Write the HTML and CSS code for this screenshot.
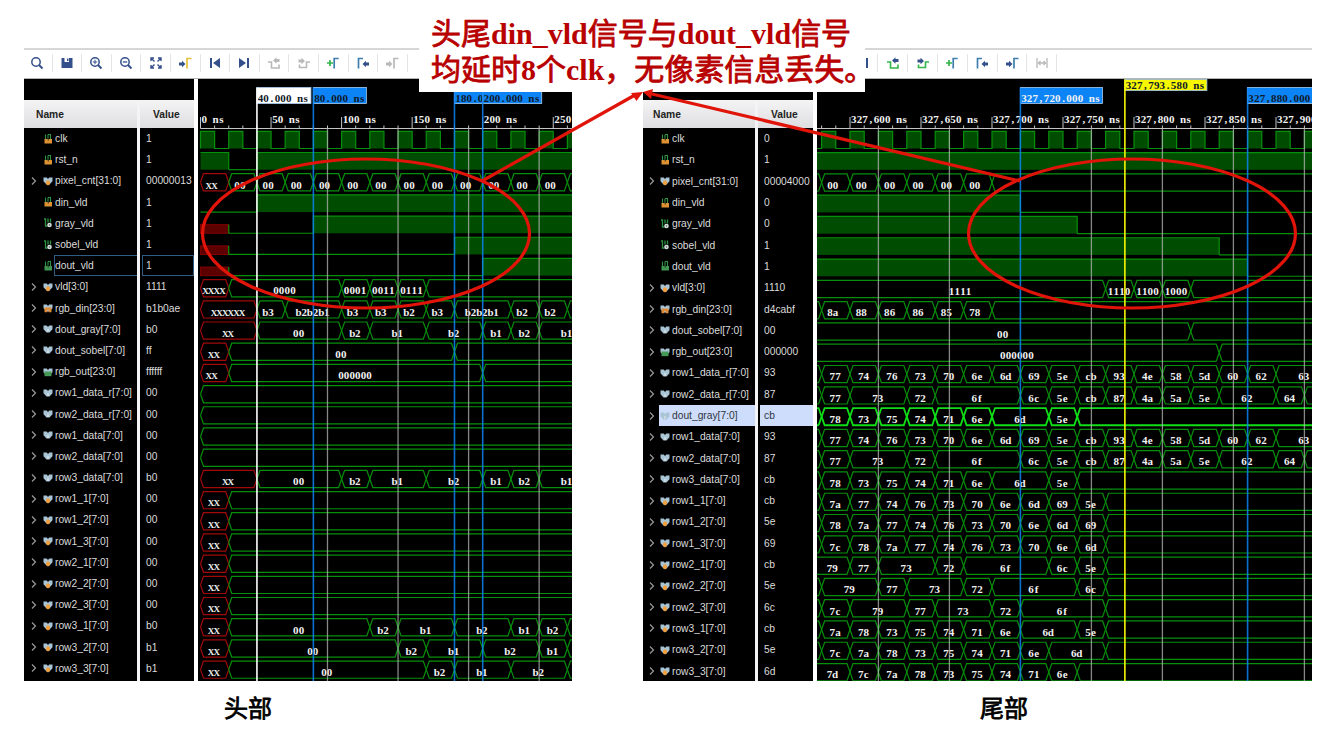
FILE: index.html
```html
<!DOCTYPE html>
<html lang="zh">
<head>
<meta charset="utf-8">
<title>Waveform</title>
<link rel="stylesheet" href="styles.css">
</head>
<body>
<main class="slide">
  <figure class="sim sim-head">
    <div class="toolbar" id="toolbar-head"></div>
    <div class="viewer" id="viewer-head"></div>
    <figcaption class="caption">头部</figcaption>
  </figure>
  <figure class="sim sim-tail">
    <div class="toolbar" id="toolbar-tail"></div>
    <div class="viewer" id="viewer-tail"></div>
    <figcaption class="caption">尾部</figcaption>
  </figure>
  <div class="callout">
    <p>头尾<b>din_vld</b>信号与<b>dout_vld</b>信号</p>
    <p>均延时<b>8</b>个<b>clk</b>，无像素信息丢失。</p>
  </div>
  <svg class="marks" width="1341" height="730" viewBox="0 0 1341 730">
    <ellipse cx="366" cy="233.5" rx="163.5" ry="74.5"/>
    <ellipse cx="1132" cy="233.5" rx="163.5" ry="74.5"/>
    <path d="M482 181 635 95M1020 181 652 94"/>
    <path class="tip" d="M643 92 631 93 636.500 101zM643 92 653 89 651 99z"/>
  </svg>
</main>
<script src="app.js"></script>
</body>
</html>
```
FILE: styles.css
```css
* { box-sizing: border-box; }
body { margin: 0; background: #fff; }
.slide {
  position: relative;
  width: 1341px;
  height: 730px;
  overflow: hidden;
  padding: 48px 29px 0 24px;
  display: flex;
  justify-content: space-between;
}
.sim { margin: 0; display: flex; flex-direction: column; }
.sim-head { width: 548px; }
.sim-tail { width: 669px; }

.toolbar {
  height: 31px;
  display: flex;
  align-items: center;
  overflow: hidden;
  background: #fff;
  border-top: 2px solid #d6d6d8;
  border-bottom: 1px solid #b4b4b4;
  padding-bottom: 2px;
}
.tool {
  flex: none;
  width: 29.6px;
  height: 18px;
  display: flex;
  justify-content: center;
  align-items: center;
  border-right: 1px solid #e4e4e6;
}
.sim-head .tool:first-child { margin-left: -1px; }
.sim-tail .tool { width: 29.8px; }
.sim-tail .tool:first-child { margin-left: -3px; }
.tool svg { display: block; }

.viewer {
  height: 602px;
  display: flex;
  background: #000;
  font: 10.25px "Liberation Sans", Arial, sans-serif;
  color: #dcdcdc;
  overflow: hidden;
}
.table { display: grid; grid-template-rows: 21px 1fr; flex: none; }
.sim-head .table { grid-template-columns: 116px 54px; width: 174px; }
.sim-tail .table { grid-template-columns: 115px 55px; width: 174px; }
.strip { grid-column: 1 / -1; }
.table { border-right: 4px solid #fff; }
.col { min-width: 0; overflow: hidden; }
.col-name { border-right: 3.500px solid #f4f4f6; }
.col-head {
  height: 28px;
  display: flex;
  align-items: center;
  background: linear-gradient(#f4f4f5, #dedee1);
  color: #222;
  font-weight: bold;
}
.col-name .col-head { padding-left: 12px; }
.sim-tail .col-name .col-head { padding-left: 10px; }
.col-value .col-head { padding-left: 13px; }
.row {
  height: 21.2px;
  display: flex;
  align-items: center;
  white-space: nowrap;
}
.sim-tail .row { height: 21.31px; }
.chev { width: 18px; padding-left: 5px; flex: none; display: flex; }
.sim-tail .chev { width: 16px; padding-left: 4px; }
.cell { flex: 1; height: 100%; display: flex; align-items: center; }
.glyph { width: 11px; flex: none; display: flex; justify-content: center; }
.signal {
  flex: 1;
  height: 100%;
  display: flex;
  align-items: center;
  border: 1px solid transparent;
  margin-left: 1px;
}
.col-value .row { padding-left: 2px; }
.number { flex: 1; height: 100%; display: flex; align-items: center; padding-left: 3px; border: 1px solid transparent; }
.focus .signal, .focus .number { border-color: #315d85; }
.focus .signal { border-right: 0; }
.picked .cell, .picked .number { background: #cdddfb; color: #30343c; }

.wave { flex: 1; display: block; }
.wave .on { fill: #004c00; }
.wave .net { fill: none; stroke: #078f0c; stroke-width: 1.2; }
.wave .bright { stroke: #10df18; stroke-width: 1.8; }
.wave .bad { fill: none; stroke: #a00a0a; stroke-width: 1.2; }
.wave .badfill { fill: #5c0000; stroke: #800000; }
.wave .grid { stroke: #bcbcbc; stroke-width: 1.3; opacity: .72; }
.wave .axis { stroke: #c4c4c4; fill: none; }
.wave text {
  font: bold 11px "Liberation Serif", "Times New Roman", serif;
  fill: #f2f2f2;
  text-anchor: middle;
}
.wave text.unknown { font-size: 9px; }
.wave text.dark { fill: #101828; }

.caption {
  font: 24px/28px "Noto Sans CJK SC", sans-serif;
  -webkit-text-stroke: .8px #000;
  color: #000;
  padding: 12px 0 0 200px;
}
.sim-tail .caption { padding-left: 337px; }

.callout {
  position: absolute;
  left: 419px;
  top: 0;
  width: 446px;
  height: 92px;
  padding: 13px 0 0 12px;
  background: #fff;
  color: #b80000;
  font: 30px/36px "Noto Sans CJK SC", sans-serif;
  -webkit-text-stroke: .8px #b80000;
  white-space: nowrap;
}
.callout p { margin: 0; height: 36px; }
.callout b { font-family: "Liberation Serif", "Times New Roman", serif; -webkit-text-stroke: 0; line-height: 1; }
.marks { position: absolute; left: 0; top: 0; fill: none; stroke: #e01408; stroke-width: 3.2; }
.marks .tip { fill: #e01408; stroke: none; }
```
FILE: app.js
```js
const NAVY = '#34508a', GREY = '#b9b9b9', GREEN = '#35b54a', BLUE = '#3f7fae';

/* ---------- toolbar ---------- */
const svg = (body, w = 16, h = 16) =>
  `<svg width="${w}" height="${h}" viewBox="0 0 ${w} ${h}" fill="none">${body}</svg>`;
const lens = inner =>
  svg(`<circle cx="7" cy="7" r="4.200" stroke="${NAVY}" stroke-width="1.5"/><path d="M10 10l3.500 3.500" stroke="${NAVY}" stroke-width="2"/>${inner}`);
const arrowR = (x, y, c) => `<path d="M${x} ${y - 1.5}h3v-1.700l3.500 3.200-3.500 3.200v-1.700h-3z" fill="${c}"/>`;
const arrowL = (x, y, c) => `<path d="M${x} ${y - 1.5}h-3v-1.700l-3.500 3.200 3.500 3.200v-1.700h3z" fill="${c}"/>`;
const edge = (x, c) => `<path d="M${x} 13.500V3.500h4.500" stroke="${c}" stroke-width="1.7"/>`;
const prevEdge = (a, b) => svg(`<path d="M2 7h3.500v6H13V9.500" stroke="${a}" stroke-width="1.6"/>${arrowL(13.5, 5.5, b)}`);
const nextEdge = (a, b) => svg(`<path d="M3.500 9.500V12.500H10.500V7H14" stroke="${a}" stroke-width="1.6"/>${arrowR(2.5, 6, b)}`);
const plusEdge = svg(`<path d="M2 8h6M5 5v6" stroke="${GREEN}" stroke-width="1.7"/>${edge(9.2, BLUE)}`);
const backEdge = svg(`${edge(3.5, BLUE)}${arrowL(14, 9, NAVY)}`);
const fwdEdge = (a, b) => svg(`${arrowR(2, 9, a)}${edge(10, b)}`);
const icons = {
  search: lens(''),
  save: svg(`<path d="M2.500 3h11v10h-11z" fill="${NAVY}"/><path d="M5.500 3h4.500v4h-4.500z" fill="#fff"/><path d="M8 3.500h1.500v2.500h-1.500z" fill="${NAVY}"/>`),
  zin: lens(`<path d="M4.800 7h4.400M7 4.800v4.400" stroke="${NAVY}"/>`),
  zout: lens(`<path d="M4.800 7h4.400" stroke="${NAVY}" stroke-width="1.3"/>`),
  fit: svg(`<path d="M3 6V3h3M10 3h3v3M13 10v3h-3M6 13H3v-3M3 3l3.500 3.500M13 3 9.500 6.500M13 13 9.500 9.500M3 13l3.500-3.500" stroke="${NAVY}" stroke-width="1.4"/>`),
  go: fwdEdge(NAVY, '#e3c13e'),
  first: svg(`<path d="M4 3v10" stroke="${NAVY}" stroke-width="2"/><path d="M13 3v10L6 8z" fill="${NAVY}"/>`),
  last: svg(`<path d="M12 3v10" stroke="${NAVY}" stroke-width="2"/><path d="M3 3v10l7-5z" fill="${NAVY}"/>`),
  prevOff: prevEdge(GREY, GREY), nextOff: nextEdge(GREY, GREY),
  prev: prevEdge(GREEN, NAVY), next: nextEdge(GREEN, NAVY),
  plus: plusEdge, back: backEdge, fwdOff: fwdEdge(GREY, GREY), fwd: fwdEdge(NAVY, BLUE),
  span: svg(`<path d="M3 3v10M13 3v10M4 8h8M6.500 6l-2 2 2 2M9.500 6l2 2-2 2" stroke="${GREY}" stroke-width="1.3"/>`)
};
const base = ['search', 'save', 'zin', 'zout', 'fit', 'go', 'first', 'last'];
const fill = (id, list) => {
  document.getElementById(id).innerHTML = list.map(n => `<span class="tool">${icons[n]}</span>`).join('');
};
fill('toolbar-head', [...base, 'prevOff', 'nextOff', 'plus', 'back', 'fwdOff']);
fill('toolbar-tail', [...base, 'prev', 'next', 'plus', 'back', 'fwd', 'span']);

/* ---------- signal glyphs ---------- */
const scalar = c => svg(`<path d="M2.500 .5V5M5 .5h2.500V5M5 .5V5" stroke="#2f9243" stroke-width="1.1"/><path d="M1.500 5h7.500v4.500h-7.500z" fill="${c}"/><path d="M5.200 4v2.500" stroke="#111" stroke-width=".8"/>`, 10, 10);
const reg = svg(`<path d="M1 1h1.500V8h2M5 .5v4M7.500 .5v4" stroke="#2f9243" stroke-width="1.300"/><circle cx="6.500" cy="7" r="2.300" fill="#d5dedb"/><circle cx="6.500" cy="7" r=".7" fill="#555"/>`, 10, 10);
const bus = c => svg(`<path d="M.5 1.500h3.200L5 3l1.300-1.500h3.200v3.800L6.500 8.500h-3L.5 5.300z" fill="#a9c4d4"/><path d="${c[1]}" fill="${c[0]}"/>`, 10, 10);
const glyphs = {
  in: scalar('#dd9334'), out: scalar('#3f9650'), reg,
  w: bus(['#c9d9e2', 'M4 5h2v3h-2z']),
  r: bus(['#efa040', 'M3 5.500 5 4l2 1.500V8L5 9.500 3 8z']),
  bi: bus(['#e08a35', 'M1.500 4.500h7v4.700h-2.800V7h-1.400v2.200h-2.800z']),
  bo: bus(['#459b55', 'M1.500 4.500h7v4.700h-7z'])
};

/* ---------- data: every trace is [end, label] segments, in ns ---------- */
const steps = (start, step, words) => words.split(' ').map((v, i) => [start + step * (i + 1), v]);
const levels = (...segs) => ({ levels: segs });
const bussed = (segs, opt = {}) => ({ segs, ...opt });

const grayHead = [[40, 'XX'], [100, '00'], [120, 'b2'], [160, 'b1'], [200, 'b2'], [220, 'b1'], [240, 'b2'], [280, 'b1']];
const quiet = [[300, '']];
const idle = [[20, 'XX'], [300, '']];
const head = {
  id: 'viewer-head', left: 198, width: 374, x: t => 200.5 + 1.411 * t, t0: 0, t1: 300, pitch: 21.19,
  grid: [90, 140, 190, 240],
  ruler: [[0, '0 ns'], [50, '50 ns'], [100, '100 ns'], [150, '150 ns'], [200, '200 ns'], [250, '250']],
  cursors: [
    [40, '#ffffff', '40.000 ns', 54, 'dark', 87.5, 16], [80, '#0d84f5', '80.000 ns', 53, 'dark', 87.5, 16],
    [180, '#0d84f5', '180.0', 28, 'dark', 87.5, 16], [200, '#0d84f5', '200.000 ns', 59, 'dark', 87.5, 16]],
  rows: [
    ['clk', '1', 'in', { clock: 1 }],
    ['rst_n', '1', 'in', levels([20, 1], [40, 0], [300, 1])],
    ['pixel_cnt[31:0]', '00000013', 'r', bussed([[20, 'XX'], ...steps(20, 20, '00 00 00 00 00 00 00 00 00 00 00 00'), [300, '']], { nudge: 3 })],
    ['din_vld', '1', 'in', levels([40, 0], [300, 1])],
    ['gray_vld', '1', 'reg', levels([20, 'x'], [80, 0], [300, 1])],
    ['sobel_vld', '1', 'reg', levels([20, 'x'], [180, 0], [300, 1])],
    ['dout_vld', '1', 'out', levels([20, 'x'], [200, 0], [300, 1]), 'focus'],
    ['vld[3:0]', '1111', 'r', bussed([[20, 'XXXX'], [100, '0000'], [120, '0001'], [140, '0011'], [160, '0111'], [300, '']])],
    ['rgb_din[23:0]', 'b1b0ae', 'bi', bussed([[40, 'XXXXXX'], [60, 'b3'], [100, 'b2b2b1'], [120, 'b3'], [140, 'b3'], [160, 'b2'], [180, 'b3'], [220, 'b2b2b1'], [240, 'b2'], [260, 'b2'], [300, '']], { nudge: 3 })],
    ['dout_gray[7:0]', 'b0', 'w', bussed(grayHead)],
    ['dout_sobel[7:0]', 'ff', 'w', bussed([[20, 'XX'], [180, '00'], [300, '']])],
    ['rgb_out[23:0]', 'ffffff', 'bo', bussed([[20, 'XX'], [200, '000000'], [300, '']], { nudge: 3 })],
    ['row1_data_r[7:0]', '00', 'w', bussed(quiet)],
    ['row2_data_r[7:0]', '00', 'w', bussed(quiet)],
    ['row1_data[7:0]', '00', 'w', bussed(quiet)],
    ['row2_data[7:0]', '00', 'w', bussed(quiet)],
    ['row3_data[7:0]', 'b0', 'w', bussed(grayHead)],
    ['row1_1[7:0]', '00', 'r', bussed(idle)],
    ['row1_2[7:0]', '00', 'r', bussed(idle)],
    ['row1_3[7:0]', '00', 'r', bussed(idle)],
    ['row2_1[7:0]', '00', 'r', bussed(idle)],
    ['row2_2[7:0]', '00', 'r', bussed(idle)],
    ['row2_3[7:0]', '00', 'r', bussed(idle)],
    ['row3_1[7:0]', 'b0', 'r', bussed([[20, 'XX'], [120, '00'], [140, 'b2'], [180, 'b1'], [220, 'b2'], [240, 'b1'], [260, 'b2'], [300, '']])],
    ['row3_2[7:0]', 'b1', 'r', bussed([[20, 'XX'], [140, '00'], [160, 'b2'], [200, 'b1'], [240, 'b2'], [260, 'b1'], [300, '']])],
    ['row3_3[7:0]', 'b1', 'r', bussed([[20, 'XX'], [160, '00'], [180, 'b2'], [220, 'b1'], [260, 'b2'], [300, '']])]
  ]
};

const lead = [580, ''], rest = [960, ''];
const run = words => [lead, ...steps(580, 20, words)];
const row1 = [...run('77 74 76 73 70 6e 6d 69 5e cb 93 4e 58 5d 60 62'), [940, '63']];
const row2 = [lead, [600, '77'], [640, '73'], [660, '72'], [720, '6f'], ...steps(720, 20, '6c 5e cb 87 4a 5a 5e'), [900, '62'], [920, '64'], rest];
const grayTail = [...run('78 73 75 74 71 6e'), [740, '6d'], [760, '5e'], rest];
const tail = {
  id: 'viewer-tail', left: 817, width: 495, x: t => 992 + 1.42 * (t - 700), t0: 576, t1: 960, pitch: 21.29,
  grid: [620, 670, 770, 820, 870, 920],
  ruler: [[600, '327,600 ns'], [650, '327,650 ns'], [700, '327,700 ns'], [750, '327,750 ns'], [800, '327,800 ns'], [850, '327,850 ns'], [900, '327,900']],
  cursors: [
    [720, '#0d84f5', '327,720.000 ns', 82, '', 87.5, 16], [880, '#0d84f5', '327,880.000', 82, 'dark', 87.5, 16],
    [793.58, '#f7f700', '327,793.580 ns', 82, 'dark', 79.5, 11]],
  rows: [
    ['clk', '0', 'in', { clock: 1 }],
    ['rst_n', '1', 'in', levels([960, 1])],
    ['pixel_cnt[31:0]', '00004000', 'r', bussed([...run('00 00 00 00 00 00'), rest], { nudge: 3 })],
    ['din_vld', '0', 'in', levels([720, 1], [960, 0])],
    ['gray_vld', '0', 'reg', levels([760, 1], [960, 0])],
    ['sobel_vld', '1', 'reg', levels([860, 1], [960, 0])],
    ['dout_vld', '1', 'out', levels([880, 1], [960, 0])],
    ['vld[3:0]', '1110', 'r', bussed([[780, '1111'], [800, '1110'], [820, '1100'], [840, '1000'], rest])],
    ['rgb_din[23:0]', 'd4cabf', 'bi', bussed([...run('8a 88 86 86 85 78'), rest], { nudge: 3 })],
    ['dout_sobel[7:0]', '00', 'w', bussed([[840, '00'], rest])],
    ['rgb_out[23:0]', '000000', 'bo', bussed([[860, '000000'], rest])],
    ['row1_data_r[7:0]', '93', 'w', bussed(row1)],
    ['row2_data_r[7:0]', '87', 'w', bussed(row2)],
    ['dout_gray[7:0]', 'cb', 'w', bussed(grayTail, { bright: 1 }), 'picked'],
    ['row1_data[7:0]', '93', 'w', bussed(row1)],
    ['row2_data[7:0]', '87', 'w', bussed(row2)],
    ['row3_data[7:0]', 'cb', 'w', bussed(grayTail)],
    ['row1_1[7:0]', 'cb', 'r', bussed([...run('7a 77 74 76 73 70 6e 6d 69 5e'), rest])],
    ['row1_2[7:0]', '5e', 'r', bussed([...run('78 7a 77 74 76 73 70 6e 6d 69'), rest])],
    ['row1_3[7:0]', '69', 'r', bussed([...run('7c 78 7a 77 74 76 73 70 6e 6d'), rest])],
    ['row2_1[7:0]', 'cb', 'r', bussed([[600, '79'], [620, '77'], [660, '73'], [680, '72'], [740, '6f'], [760, '6c'], [780, '5e'], rest])],
    ['row2_2[7:0]', '5e', 'r', bussed([lead, [620, '79'], [640, '77'], [680, '73'], [700, '72'], [760, '6f'], [780, '6c'], rest])],
    ['row2_3[7:0]', '6c', 'r', bussed([lead, [600, '7c'], [640, '79'], [660, '77'], [700, '73'], [720, '72'], [780, '6f'], rest])],
    ['row3_1[7:0]', 'cb', 'r', bussed([...run('7a 78 73 75 74 71 6e'), [760, '6d'], [780, '5e'], rest])],
    ['row3_2[7:0]', '5e', 'r', bussed([...run('7c 7a 78 73 75 74 71 6e'), [780, '6d'], rest])],
    ['row3_3[7:0]', '6d', 'r', bussed([[600, '7d'], ...steps(600, 20, '7c 7a 78 73 75 74 71 6e'), rest])]
  ]
};

/* ---------- drawing ---------- */
const ADV = 5.65;
/* fixed-pitch text: every character is centred in a cell of its own */
const mono = (s, x, y, cls = '') => {
  const xs = [...s].map((_, i) => (x + ADV * (i + 0.5)).toFixed(1)).join(' ');
  return `<text class="${cls}" x="${xs}" y="${y.toFixed(1)}">${s}</text>`;
};

function drawTrace(v, trace, top) {
  const bot = top + 17.2, mid = top + 8.6;
  let out = '', from = v.t0;
  if (trace.clock) {
    let d = `M${v.x(v.t0)} ${bot}`;
    for (let t = Math.ceil(v.t0 / 20) * 20; t < v.t1; t += 20) {
      const a = v.x(t), b = v.x(t + 10);
      out += `<rect class="on" x="${a}" y="${top}" width="${b - a}" height="17.2"/>`;
      d += `H${a}V${top}H${b}V${bot}`;
    }
    return out + `<path class="net" d="${d}"/>`;
  }
  if (trace.levels) {
    trace.levels.forEach(([to, lv], i) => {
      const a = v.x(from), b = v.x(to);
      if (lv === 1) {
        out += `<rect class="on" x="${a}" y="${top}" width="${b - a}" height="17.2"/>`;
        out += `<path class="net" d="M${a} ${i ? bot : top}V${top}H${b}V${bot}"/>`;
      } else if (lv === 0) {
        out += `<path class="net" d="M${a} ${bot}H${b}"/>`;
      } else {
        out += `<rect class="badfill" x="${a}" y="${mid}" width="${b - a}" height="8.6"/>`;
        out += `<path class="net" d="M${b} ${mid}V${bot}"/>`;
      }
      from = to;
    });
    return out;
  }
  trace.segs.forEach(([to, label], i) => {
    const a = v.x(from), b = v.x(to), s = 3;
    const unknown = label[0] === 'X';
    const open = i === 0 && v.t0 > 0;
    const start = open ? `M${a} ${top}` : `M${a} ${mid}L${a + s} ${top}`;
    const end = open ? `M${b - s} ${bot}L${a} ${bot}` : `L${a + s} ${bot}L${a} ${mid}`;
    out += `<path class="${unknown ? 'bad' : 'net'}${trace.bright ? ' bright' : ''}" d="${start}L${b - s} ${top}L${b} ${mid}L${b - s} ${bot}${end}"/>`;
    if (label) {
      const shift = trace.nudge && to - from <= 20 ? trace.nudge : 0.7;
      out += mono(label, (a + b) / 2 - shift - label.length * ADV / 2, top + 14.8, unknown ? 'unknown' : '');
    }
    from = to;
  });
  return out;
}

function drawWave(v) {
  let s = '';
  v.rows.forEach((r, i) => { s += drawTrace(v, r[3], 131.3 + v.pitch * i); });
  s += `<path class="axis" d="M${v.x(v.t0)} 128.500H${v.left + v.width}"/>`;
  for (let t = Math.ceil(v.t0 / 10) * 10; t < v.t1; t += 10) {
    s += `<path class="axis" d="M${v.x(t)} ${t % 50 ? 125.5 : 117}V128.500"/>`;
  }
  v.ruler.forEach(([t, label]) => { s += mono(label, v.x(t) + 1, 122.5); });
  v.grid.forEach(t => { s += `<path class="grid" d="M${v.x(t)} 128V681"/>`; });
  v.cursors.forEach(([t, c, label, w, cls, y, h]) => {
    const x = v.x(t);
    s += `<rect x="${x}" y="${y}" width="${w}" height="${h}" fill="${c}" stroke="#a9cdf0" stroke-width=".8"/>`;
    s += mono(label, x + 0.7, y + h - 2, cls);
    s += `<path d="M${x} ${y}V681" stroke="${c}" stroke-width="1.6" opacity="${c === '#0d84f5' ? 0.85 : 1}"/>`;
  });
  return `<svg class="wave" width="${v.width}" height="602" viewBox="${v.left} 79 ${v.width} 602">${s}</svg>`;
}

const chevron = svg('<path d="M3 1.500 6.500 5 3 8.500" stroke="#9a9a9a" stroke-width="1.2"/>', 9, 10);
[head, tail].forEach(v => {
  const names = v.rows.map(([n, , g, , st = '']) =>
    `<div class="row ${st}"><span class="chev">${n.includes('[') ? chevron : ''}</span><span class="cell"><span class="glyph">${glyphs[g]}</span><span class="signal">${n}</span></span></div>`).join('');
  const values = v.rows.map(([, val, , , st = '']) =>
    `<div class="row ${st}"><span class="number">${val}</span></div>`).join('');
  document.getElementById(v.id).innerHTML =
    `<div class="table"><div class="strip"></div>` +
    `<div class="col col-name"><div class="col-head">Name</div>${names}</div>` +
    `<div class="col col-value"><div class="col-head">Value</div>${values}</div></div>` + drawWave(v);
});
```
